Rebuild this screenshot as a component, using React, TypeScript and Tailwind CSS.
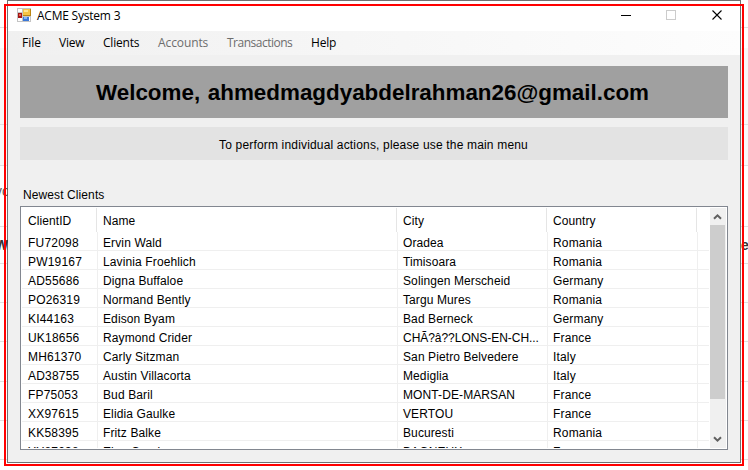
const clients = [
  ["FU72098", "Ervin Wald", "Oradea", "Romania"],
  ["PW19167", "Lavinia Froehlich", "Timisoara", "Romania"],
  ["AD55686", "Digna Buffaloe", "Solingen Merscheid", "Germany"],
  ["PO26319", "Normand Bently", "Targu Mures", "Romania"],
  ["KI44163", "Edison Byam", "Bad Berneck", "Germany"],
  ["UK18656", "Raymond Crider", "CHÃ?â??LONS-EN-CH...", "France"],
  ["MH61370", "Carly Sitzman", "San Pietro Belvedere", "Italy"],
  ["AD38755", "Austin Villacorta", "Mediglia", "Italy"],
  ["FP75053", "Bud Baril", "MONT-DE-MARSAN", "France"],
  ["XX97615", "Elidia Gaulke", "VERTOU", "France"],
  ["KK58395", "Fritz Balke", "Bucuresti", "Romania"],
  ["YY87238", "Elna Oravic", "BAGNEUX", "France"],
];

const menu = [
  { label: "File", cls: "w-[37px] text-black" },
  { label: "View", cls: "w-[44px] tracking-[-0.2px] text-black" },
  { label: "Clients", cls: "w-[55px] tracking-[-0.2px] text-black" },
  { label: "Accounts", cls: "w-[69px] tracking-[-0.1px] text-[#6d6d6d]" },
  { label: "Transactions", cls: "w-[84px] tracking-[-0.5px] text-[#6d6d6d]" },
  { label: "Help", cls: "w-[40px] tracking-[-0.2px] text-black" },
];

function Backdrop() {
  const stripes = [
    "h-[21px] bg-white",
    "h-[76px] bg-[#f8f8f8]",
    "h-[41px] bg-[#f9f9f9]",
    "h-[61px] bg-white",
    "h-[37px] bg-white",
    "h-[39px] bg-white",
    "h-[39px] bg-white",
    "h-[40px] bg-white",
    "h-[39px] bg-white",
    "h-[39px] bg-white",
    "h-[11px] bg-white",
  ];
  return (
    <div className="absolute inset-0 flex flex-col bg-white">
      <div className="h-[27px]" />
      {stripes.map((s, i) => (
        <div key={i} className={`shrink-0 ${i === 1 ? "" : "border-t border-[#e0e0e0]"} ${s}`} />
      ))}
    </div>
  );
}

function AppIcon() {
  return (
    <svg width="14" height="14" viewBox="0 0 14 14" shapeRendering="crispEdges">
      <rect width="14" height="14" fill="#c4c4c4" />
      <rect x="1" y="1" width="4" height="3" fill="#fff" />
      <rect x="1" y="10" width="4" height="3" fill="#fff" />
      <rect x="12" y="9" width="1" height="4" fill="#fff" />
      <rect x="1" y="5" width="4" height="5" fill="#a31515" />
      <rect x="2" y="6" width="2" height="2" fill="#e8644e" />
      <rect x="6" y="1" width="8" height="7" fill="#b98613" />
      <rect x="6" y="1" width="7" height="6" fill="#f6c445" />
      <rect x="7" y="2" width="4" height="2" fill="#fde596" />
      <rect x="6" y="9" width="6" height="4" fill="#3b78d8" />
      <rect x="7" y="9" width="3" height="2" fill="#86b6f4" />
    </svg>
  );
}

function TitleBar() {
  return (
    <div className="flex h-[30px] items-center bg-white pl-[9px]">
      <div className="mb-0.5"><AppIcon /></div>
      <span className="ml-1.5 font-['Open_Sans',sans-serif] text-[12px] leading-[30px] tracking-[-0.22px]">ACME System 3</span>
      <svg className="ml-auto mr-[17px]" width="102" height="12" viewBox="0 0 102 12">
        <rect x="0" y="5" width="10" height="1" fill="#000" />
        <rect x="45.5" y="0.5" width="9" height="9" fill="none" stroke="#cccccc" />
        <path d="M91.5 0.5l9 9M100.5 0.5l-9 9" stroke="#000" strokeWidth="1.1" fill="none" />
      </svg>
    </div>
  );
}

const columnStyle = [
  "pl-1.5 tracking-[0.2px]",
  "pl-[5px] tracking-[0.12px]",
  "pl-[5px] tracking-[0.1px]",
  "pl-[5px] tracking-[0.17px]",
];

function Row({ cells }: { cells: string[] }) {
  return (
    <div className="grid h-[19px] shrink-0 grid-cols-[76px_300px_150px_150px_11px] border-b border-[#efefef] leading-[22px]">
      {cells.map((c, i) => (
        <div key={i} className={`h-[19px] whitespace-nowrap border-r border-[#efefef] ${columnStyle[i]}`}>
          {c.endsWith("...") ? <span className="tracking-[-0.04px]">{c}</span> : c}
        </div>
      ))}
    </div>
  );
}

function ClientList() {
  return (
    <div className="flex h-[244px] border border-[#828790] bg-white p-px">
      <div className="flex w-[687px] flex-col overflow-hidden">
        <div className="grid h-6 shrink-0 grid-cols-[75px_300px_150px_150px] leading-[26px] tracking-[0.08px]">
          {["ClientID", "Name", "City", "Country"].map((h) => (
            <div key={h} className="h-6 border-r border-[#e5e5e5] pl-1.5">{h}</div>
          ))}
        </div>
        {clients.map((c) => (
          <Row key={c[0]} cells={c} />
        ))}
      </div>
      <div className="ml-px flex w-4 flex-col items-start bg-[#f0f0f0]">
        <svg width="15" height="17" viewBox="0 0 15 17">
          <path d="M4 10.8L7.5 7.3L11 10.8" stroke="#606060" strokeWidth="2" fill="none" />
        </svg>
        <div className="h-[174px] w-[15px] bg-[#cdcdcd]" />
        <svg className="mt-auto" width="15" height="17" viewBox="0 0 15 17">
          <path d="M4 6.2L7.5 9.7L11 6.2" stroke="#606060" strokeWidth="2" fill="none" />
        </svg>
      </div>
    </div>
  );
}

export default function App() {
  return (
    <div className="relative h-[470px] w-[748px] overflow-hidden font-['Liberation_Sans',Arial,sans-serif] text-[12px] text-black">
      <Backdrop />
      <main className="relative ml-[7px] flex h-[463px] w-[734px] flex-col border border-[#707070] bg-[#f0f0f0]">
        <TitleBar />
        <nav className="flex h-6 items-center bg-linear-to-r from-[#f0f0f0] to-[#fdfdfd] pl-3.5 font-['Open_Sans',sans-serif]">
          {menu.map((m) => (
            <span key={m.label} className={`shrink-0 whitespace-nowrap ${m.cls}`}>{m.label}</span>
          ))}
        </nav>
        <div className="flex flex-col px-3 pt-[11px]">
          <h1 className="h-[52px] bg-[#a0a0a0] pr-[3px] text-center text-[22.4px] font-bold leading-[54px] [word-spacing:1.5px]">Welcome, ahmedmagdyabdelrahman26@gmail.com</h1>
          <p className="mt-[9px] h-[33px] bg-[#e3e3e3] pr-px text-center leading-[36px] tracking-[0.17px]">To perform individual actions, please use the main menu</p>
          <h2 className="mt-[26px] h-5 pl-[3px] leading-[18px] tracking-[0.1px]">Newest Clients</h2>
          <ClientList />
        </div>
      </main>
      <span className="absolute left-[-5px] top-[183px] w-[13px] overflow-hidden text-[14px] leading-4 text-[#555]">vo</span>
      <span className="absolute left-[-5px] top-[237px] w-[13px] overflow-hidden text-[14px] font-bold leading-4 text-[#333]">W</span>
      <span className="absolute left-[741px] top-[237px] text-[14px] font-bold leading-4 text-[#333]">e</span>
      <div className="pointer-events-none absolute left-1 top-1 h-[462px] w-[740px] border-2 border-[#ff0000]" />
    </div>
  );
}
